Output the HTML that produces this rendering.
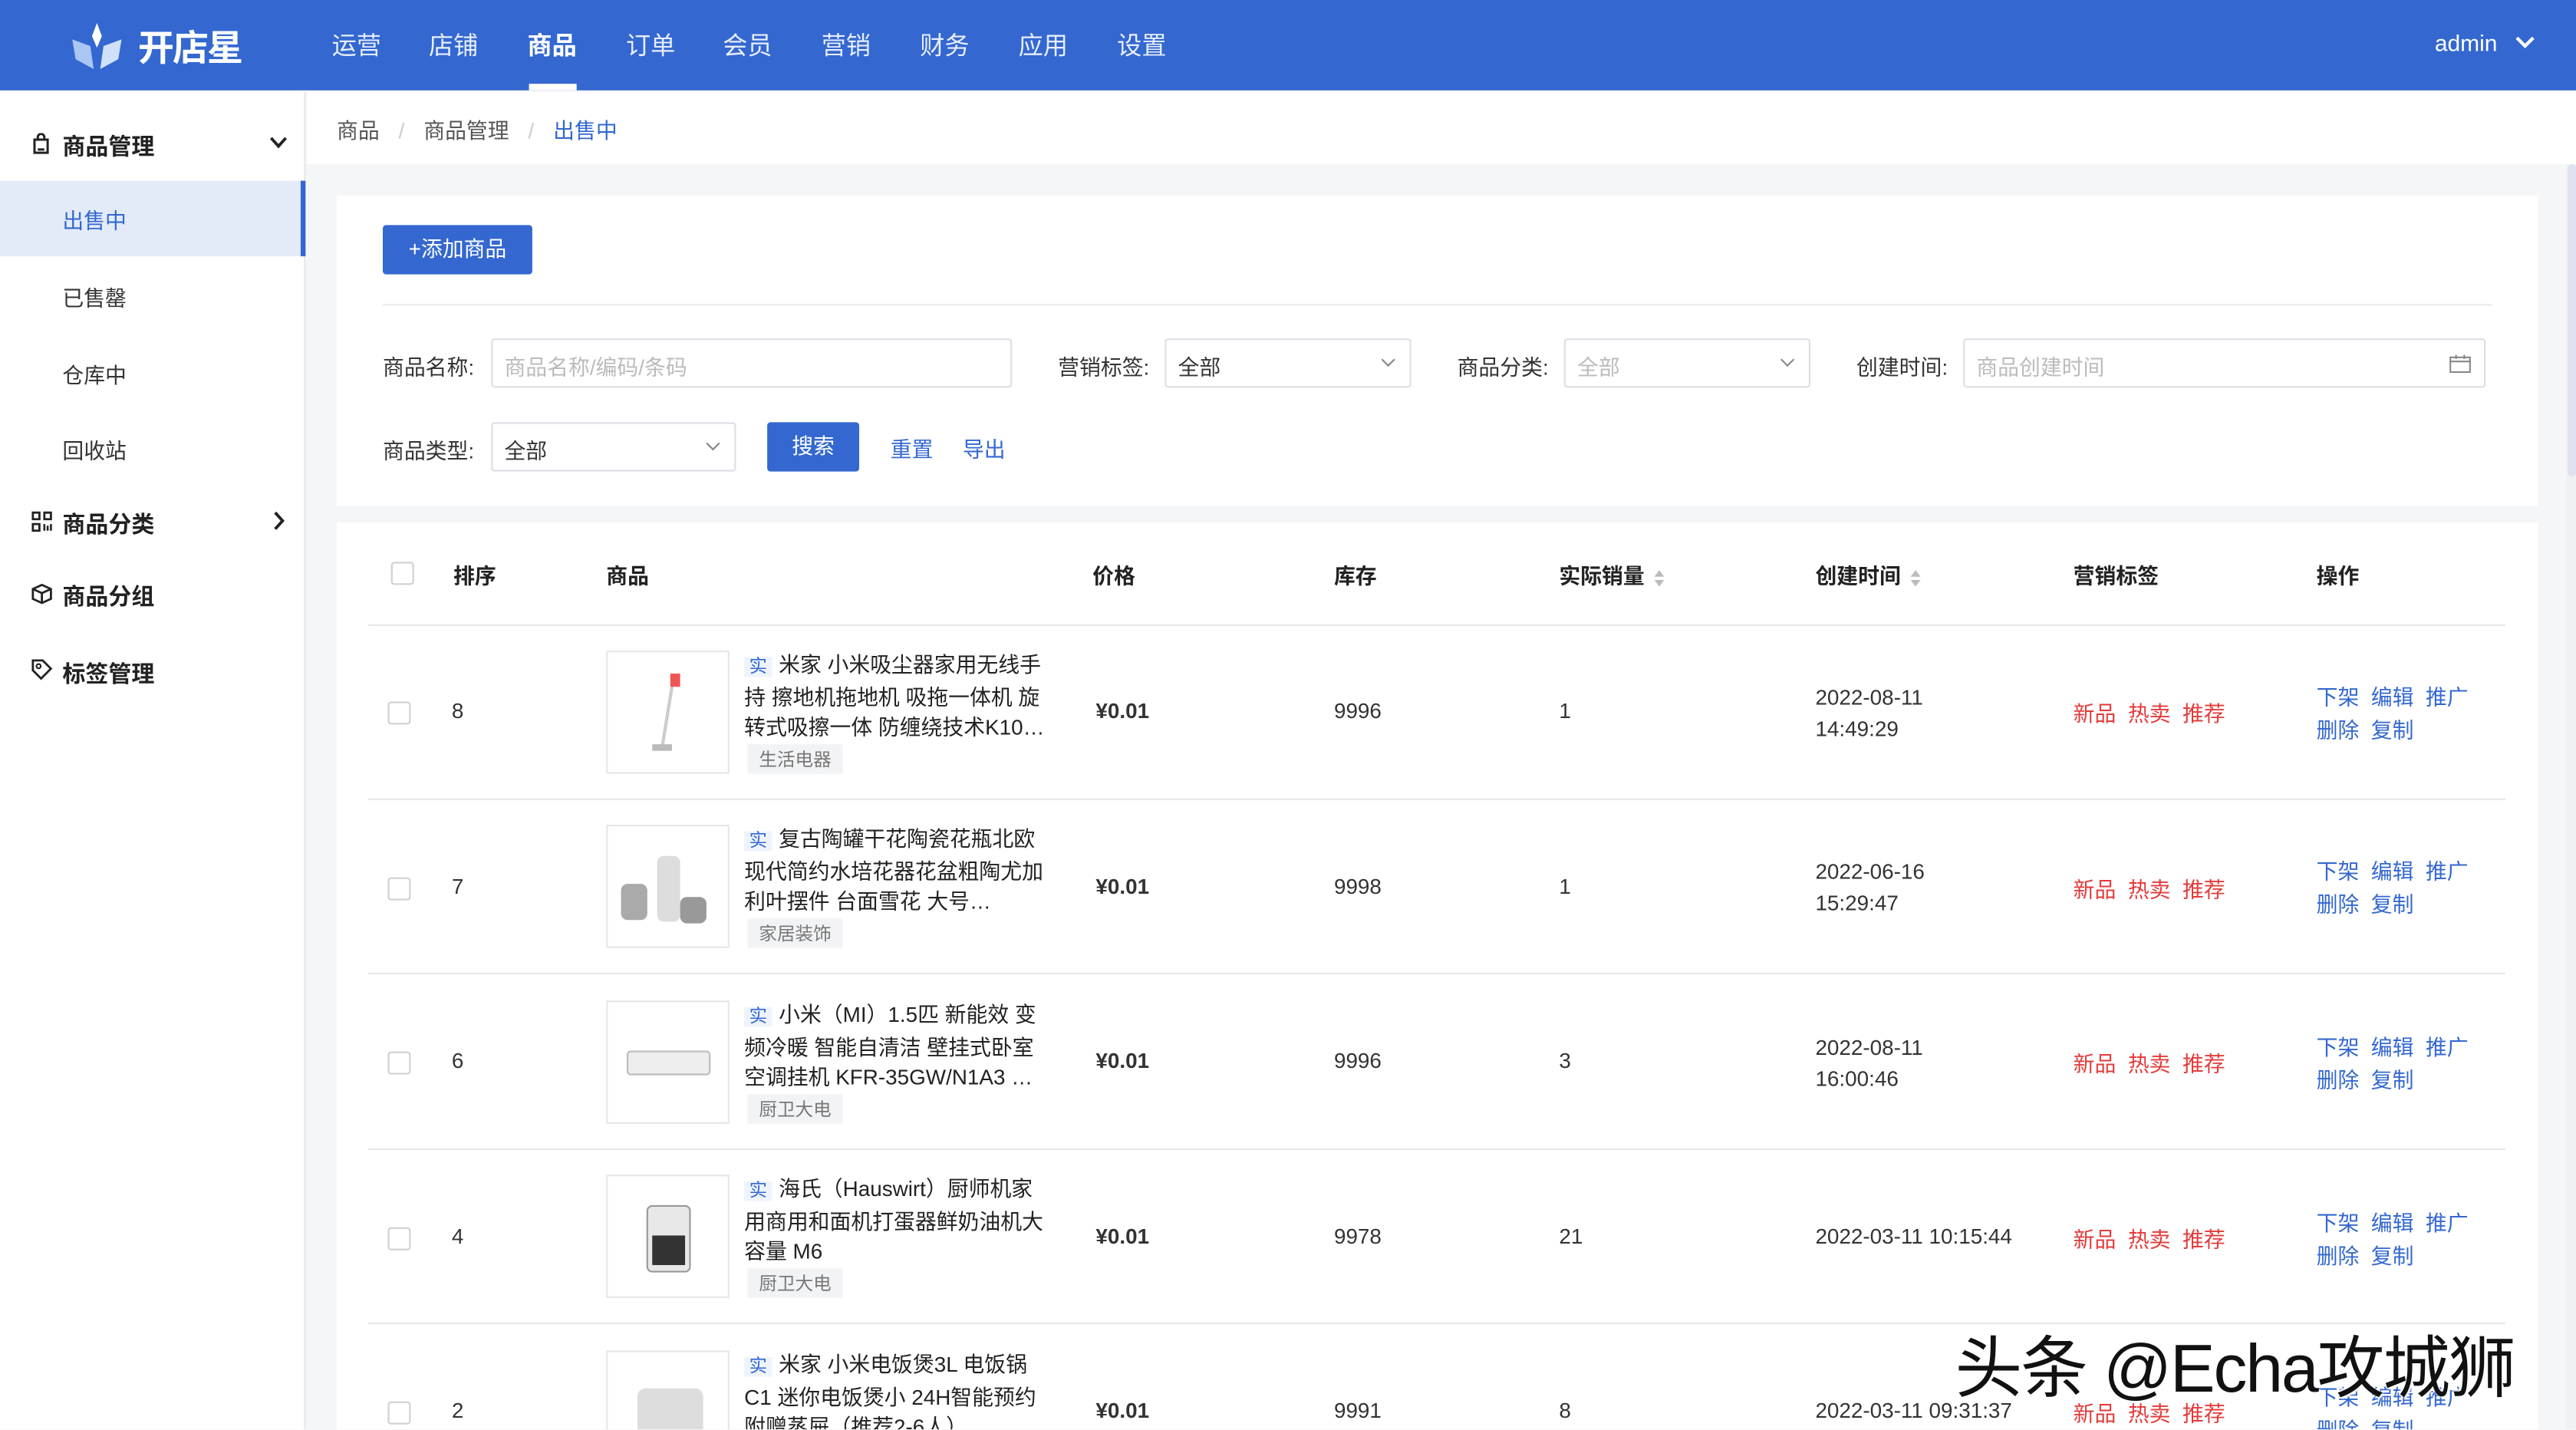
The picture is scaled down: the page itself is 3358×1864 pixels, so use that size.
<!DOCTYPE html>
<html><head><meta charset="utf-8"><style>
*{box-sizing:border-box;margin:0;padding:0}
html,body{width:3358px;height:1864px;overflow:hidden;background:#f5f6f8}
#s{position:absolute;left:0;top:0;width:1568px;height:870.4px;transform:scale(2.14158);transform-origin:0 0;font-family:"Liberation Sans","Noto Sans CJK SC",sans-serif;color:#333;font-size:13px;background:#f5f6f8;overflow:hidden}
.a{position:absolute;white-space:nowrap}
.hd{left:0;top:0;width:1568px;height:55px;background:#3468d0}
.nav{top:17px;font-size:15px;color:#e8eefc}
.sb{left:0;top:56px;width:186px;height:815px;background:#fff;border-right:1px solid #e8e8e8}
.mi{font-size:14px;font-weight:bold;color:#222}
.si{font-size:13px;color:#333}
.card{background:#fff}
.lbl{font-size:13px;color:#333}
.inp{border:1px solid #dcdfe6;border-radius:2px;height:30px;background:#fff;font-size:13px;color:#bbb;padding:6px 7px}
.sel{color:#333}
.chev{position:absolute;right:10px;top:9px;width:6px;height:6px;border-right:1px solid #888;border-bottom:1px solid #888;transform:rotate(45deg)}
.th{font-size:13px;font-weight:bold;color:#222;top:340px}
.cb{width:14px;height:14px;border:1px solid #d0d0d0;border-radius:2px;background:#fff}
.line{height:1px;background:#e8e8e8;left:224px;width:1301px}
.img{width:75px;height:75px;border:1px solid #e6e6e6;background:#fff}
.nm{width:185px;white-space:normal;font-size:13px;line-height:18.5px;color:#222}
.nm b{font-weight:normal;color:#3468d0;background:#eef3fc;font-size:11px;padding:0 3px;margin-right:4px}
.cat{font-size:11px;color:#777;background:#f2f3f5;padding:1px 7px}
.red{color:#e33b3b}
.blu{color:#3468d0}
.sort{display:inline-block;vertical-align:middle;margin-left:6px;width:6px;height:10px;position:relative}
.sort:before{content:"";position:absolute;top:0;left:0;border:3px solid transparent;border-bottom:4px solid #bbb;border-top:0}
.sort:after{content:"";position:absolute;bottom:0;left:0;border:3px solid transparent;border-top:4px solid #bbb;border-bottom:0}
</style></head><body><div id="s">
<div class="a hd"></div>
<svg class="a" style="left:40px;top:12px" width="38" height="32" viewBox="0 0 38 32"><path d="M19 2 L22 10 L19 17 L16 10Z" fill="#fff"/><path d="M4 12 L15 16 L17 30 L6 24Z" fill="#a9c6f5"/><path d="M34 12 L23 16 L21 30 L32 24Z" fill="#cfe0fb"/></svg>
<div class="a" style="left:84px;top:12px;font-size:22px;font-weight:bold;color:#fff;letter-spacing:-1px">开店星</div>
<div class="a nav" style="left:202px">运营</div>
<div class="a nav" style="left:261px">店铺</div>
<div class="a nav" style="left:321px;color:#fff;font-weight:bold">商品</div>
<div class="a" style="left:322px;top:51px;width:29px;height:4px;background:#fff"></div>
<div class="a nav" style="left:381px">订单</div>
<div class="a nav" style="left:440px">会员</div>
<div class="a nav" style="left:500px">营销</div>
<div class="a nav" style="left:560px">财务</div>
<div class="a nav" style="left:620px">应用</div>
<div class="a nav" style="left:680px">设置</div>
<div class="a" style="left:1482px;top:18px;font-size:14px;color:#fff">admin</div>
<svg class="a" style="left:1531px;top:22px" width="12" height="8"><path d="M1 1 L6 6 L11 1" stroke="#fff" stroke-width="2" fill="none"/></svg>

<div class="a sb"></div>
<svg class="a" style="left:19px;top:81px" width="12" height="13"><path d="M2 4 H10 V12 H2Z M4 4 V2.5 A2 2 0 0 1 8 2.5 V4 M4 10 H8" stroke="#222" stroke-width="1.4" fill="none"/></svg>
<div class="a mi" style="left:38px;top:79px">商品管理</div>
<svg class="a" style="left:164px;top:83px" width="11" height="8"><path d="M1 1 L5.5 6 L10 1" stroke="#222" stroke-width="1.8" fill="none"/></svg>
<div class="a" style="left:0;top:110px;width:186px;height:46px;background:#e3ebf9;border-right:3px solid #3468d0"></div>
<div class="a si" style="left:38px;top:124px;color:#3468d0">出售中</div>
<div class="a si" style="left:38px;top:171px">已售罄</div>
<div class="a si" style="left:38px;top:218px">仓库中</div>
<div class="a si" style="left:38px;top:264px">回收站</div>
<svg class="a" style="left:19px;top:311px" width="13" height="13"><path d="M1 1h4v4h-4z M8 1h4v4h-4z M1 8h4v4h-4z" stroke="#222" stroke-width="1.3" fill="none"/><path d="M8 8v4 M10 9v3 M12 8v4" stroke="#222" stroke-width="1.2"/></svg>
<div class="a mi" style="left:38px;top:309px">商品分类</div>
<svg class="a" style="left:166px;top:311px" width="8" height="12"><path d="M1.5 1 L6 6 L1.5 11" stroke="#222" stroke-width="1.8" fill="none"/></svg>
<svg class="a" style="left:19px;top:355px" width="13" height="13"><path d="M6.5 1 L12 3.5 V9.5 L6.5 12 L1 9.5 V3.5Z M1 3.5 L6.5 6 L12 3.5 M6.5 6 V12" stroke="#222" stroke-width="1.3" fill="none"/></svg>
<div class="a mi" style="left:38px;top:353px">商品分组</div>
<svg class="a" style="left:19px;top:401px" width="13" height="13"><path d="M1 6 L6 1 H12 V7 L7 12Z" stroke="#222" stroke-width="1.3" fill="none" transform="rotate(-90 6.5 6.5)"/><circle cx="4.5" cy="4.5" r="1.3" stroke="#222" fill="none"/></svg>
<div class="a mi" style="left:38px;top:400px">标签管理</div>

<div class="a" style="left:187px;top:56px;width:1381px;height:44px;background:#fff"></div>
<div class="a" style="left:205px;top:69px;color:#555">商品 <span style="color:#ccc;margin:0 8px">/</span> 商品管理 <span style="color:#ccc;margin:0 8px">/</span> <span style="color:#3468d0">出售中</span></div>

<div class="a card" style="left:205px;top:119px;width:1340px;height:189px"></div>
<div class="a" style="left:233px;top:137px;width:91px;height:30px;background:#3468d0;border-radius:2px;color:#fff;font-size:13px;text-align:center;line-height:30px">+添加商品</div>
<div class="a" style="left:233px;top:185px;width:1284px;height:1px;background:#ebebeb"></div>
<div class="a lbl" style="left:233px;top:213px">商品名称:</div>
<div class="a inp" style="left:299px;top:206px;width:317px">商品名称/编码/条码</div>
<div class="a lbl" style="left:644px;top:213px">营销标签:</div>
<div class="a inp sel" style="left:709px;top:206px;width:150px">全部<i class="chev"></i></div>
<div class="a lbl" style="left:887px;top:213px">商品分类:</div>
<div class="a inp" style="left:952px;top:206px;width:150px">全部<i class="chev"></i></div>
<div class="a lbl" style="left:1130px;top:213px">创建时间:</div>
<div class="a inp" style="left:1195px;top:206px;width:318px">商品创建时间</div>
<svg class="a" style="left:1491px;top:215px" width="13" height="12"><path d="M0.5 2.5h12v9h-12z M0.5 5h12 M4 1v2.5 M9 1v2.5" stroke="#888" fill="none"/></svg>
<div class="a lbl" style="left:233px;top:264px">商品类型:</div>
<div class="a inp sel" style="left:299px;top:257px;width:149px">全部<i class="chev"></i></div>
<div class="a" style="left:467px;top:257px;width:56px;height:30px;background:#3468d0;border-radius:2px;color:#fff;text-align:center;line-height:30px">搜索</div>
<div class="a blu" style="left:542px;top:263px">重置</div>
<div class="a blu" style="left:586px;top:263px">导出</div>

<div class="a card" style="left:205px;top:318px;width:1340px;height:560px"></div>
<div class="a cb" style="left:238px;top:342px"></div>
<div class="a th" style="left:276px">排序</div>
<div class="a th" style="left:369px">商品</div>
<div class="a th" style="left:665px">价格</div>
<div class="a th" style="left:812px">库存</div>
<div class="a th" style="left:949px">实际销量<span class="sort"></span></div>
<div class="a th" style="left:1105px">创建时间<span class="sort"></span></div>
<div class="a th" style="left:1262px">营销标签</div>
<div class="a th" style="left:1410px">操作</div>
<div class="a line" style="top:380px"></div>
<div class="a line" style="top:486px"></div>
<div class="a line" style="top:592px"></div>
<div class="a line" style="top:699px"></div>
<div class="a line" style="top:805px"></div>

<div class="a cb" style="left:236px;top:427px"></div><div class="a" style="left:275px;top:425px">8</div>
<div class="a img" style="left:369px;top:396px"><svg width="73" height="73"><path d="M40 15 L33 58" stroke="#ccc" stroke-width="2"/><rect x="38" y="13" width="6" height="8" fill="#e55"/><rect x="27" y="56" width="12" height="4" fill="#bbb"/></svg></div>
<div class="a nm" style="left:453px;top:396px"><b>实</b>米家 小米吸尘器家用无线手持 擦地机拖地机 吸拖一体机 旋转式吸擦一体 防缠绕技术K10…</div>
<div class="a cat" style="left:455px;top:453px">生活电器</div>
<div class="a" style="left:667px;top:425px;font-weight:bold">¥0.01</div>
<div class="a" style="left:812px;top:425px">9996</div><div class="a" style="left:949px;top:425px">1</div>
<div class="a" style="left:1105px;top:415px;line-height:19px">2022-08-11<br>14:49:29</div>
<div class="a red" style="left:1262px;top:424px">新品&nbsp; 热卖&nbsp; 推荐</div>
<div class="a blu" style="left:1410px;top:415px;line-height:20px">下架&nbsp; 编辑&nbsp; 推广<br>删除&nbsp; 复制</div>

<div class="a cb" style="left:236px;top:534px"></div><div class="a" style="left:275px;top:532px">7</div>
<div class="a img" style="left:369px;top:502px"><svg width="73" height="73"><rect x="30" y="18" width="14" height="40" rx="4" fill="#ddd"/><rect x="8" y="35" width="16" height="22" rx="4" fill="#aaa"/><rect x="44" y="43" width="16" height="16" rx="4" fill="#999"/></svg></div>
<div class="a nm" style="left:453px;top:502px"><b>实</b>复古陶罐干花陶瓷花瓶北欧现代简约水培花器花盆粗陶尤加利叶摆件 台面雪花 大号…</div>
<div class="a cat" style="left:455px;top:559px">家居装饰</div>
<div class="a" style="left:667px;top:532px;font-weight:bold">¥0.01</div>
<div class="a" style="left:812px;top:532px">9998</div><div class="a" style="left:949px;top:532px">1</div>
<div class="a" style="left:1105px;top:521px;line-height:19px">2022-06-16<br>15:29:47</div>
<div class="a red" style="left:1262px;top:531px">新品&nbsp; 热卖&nbsp; 推荐</div>
<div class="a blu" style="left:1410px;top:521px;line-height:20px">下架&nbsp; 编辑&nbsp; 推广<br>删除&nbsp; 复制</div>

<div class="a cb" style="left:236px;top:640px"></div><div class="a" style="left:275px;top:638px">6</div>
<div class="a img" style="left:369px;top:609px"><svg width="73" height="73"><rect x="12" y="30" width="50" height="14" rx="2" fill="#eee" stroke="#bbb"/></svg></div>
<div class="a nm" style="left:453px;top:609px"><b>实</b>小米（MI）1.5匹 新能效 变频冷暖 智能自清洁 壁挂式卧室空调挂机 KFR-35GW/N1A3 …</div>
<div class="a cat" style="left:455px;top:666px">厨卫大电</div>
<div class="a" style="left:667px;top:638px;font-weight:bold">¥0.01</div>
<div class="a" style="left:812px;top:638px">9996</div><div class="a" style="left:949px;top:638px">3</div>
<div class="a" style="left:1105px;top:628px;line-height:19px">2022-08-11<br>16:00:46</div>
<div class="a red" style="left:1262px;top:637px">新品&nbsp; 热卖&nbsp; 推荐</div>
<div class="a blu" style="left:1410px;top:628px;line-height:20px">下架&nbsp; 编辑&nbsp; 推广<br>删除&nbsp; 复制</div>

<div class="a cb" style="left:236px;top:747px"></div><div class="a" style="left:275px;top:745px">4</div>
<div class="a img" style="left:369px;top:715px"><svg width="73" height="73"><rect x="24" y="18" width="26" height="40" rx="3" fill="#e8e8e8" stroke="#999"/><rect x="27" y="36" width="20" height="18" fill="#333"/></svg></div>
<div class="a nm" style="left:453px;top:715px"><b>实</b>海氏（Hauswirt）厨师机家用商用和面机打蛋器鲜奶油机大容量 M6</div>
<div class="a cat" style="left:455px;top:772px">厨卫大电</div>
<div class="a" style="left:667px;top:745px;font-weight:bold">¥0.01</div>
<div class="a" style="left:812px;top:745px">9978</div><div class="a" style="left:949px;top:745px">21</div>
<div class="a" style="left:1105px;top:745px">2022-03-11 10:15:44</div>
<div class="a red" style="left:1262px;top:744px">新品&nbsp; 热卖&nbsp; 推荐</div>
<div class="a blu" style="left:1410px;top:735px;line-height:20px">下架&nbsp; 编辑&nbsp; 推广<br>删除&nbsp; 复制</div>

<div class="a cb" style="left:236px;top:853px"></div><div class="a" style="left:275px;top:851px">2</div>
<div class="a img" style="left:369px;top:822px"><svg width="73" height="73"><rect x="18" y="22" width="40" height="40" rx="5" fill="#ddd"/></svg></div>
<div class="a nm" style="left:453px;top:822px"><b>实</b>米家 小米电饭煲3L 电饭锅C1 迷你电饭煲小 24H智能预约 附赠蒸屉（推荐2-6人）</div>
<div class="a" style="left:667px;top:851px;font-weight:bold">¥0.01</div>
<div class="a" style="left:812px;top:851px">9991</div><div class="a" style="left:949px;top:851px">8</div>
<div class="a" style="left:1105px;top:851px">2022-03-11 09:31:37</div>
<div class="a red" style="left:1262px;top:850px">新品&nbsp; 热卖&nbsp; 推荐</div>
<div class="a blu" style="left:1410px;top:841px;line-height:20px">下架&nbsp; 编辑&nbsp; 推广<br>删除&nbsp; 复制</div>

<div class="a" style="left:1562px;top:100px;width:6px;height:771px;background:#f0f1f5"></div>
<div class="a" style="left:1563px;top:100px;width:5px;height:190px;background:#dde2ee;border-radius:3px"></div>

<div class="a" style="left:1190px;top:799px;font-size:41px;color:#111;letter-spacing:-1px;text-shadow:1px 1px 1px #fff,-1px -1px 1px #fff">头条 @Echa攻城狮</div>
</div></body></html>
